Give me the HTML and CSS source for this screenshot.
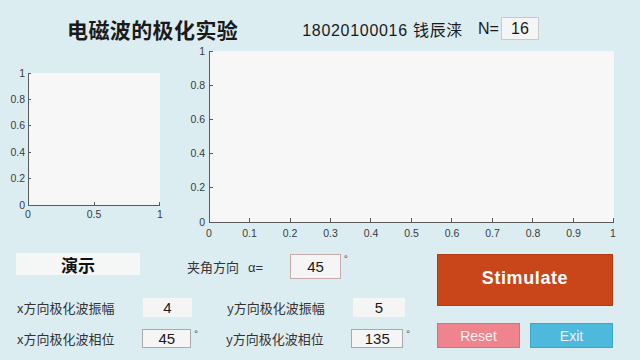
FILE: index.html
```html
<!DOCTYPE html>
<html lang="zh-CN">
  <head>
    <meta charset="UTF-8" />
    <meta name="viewport" content="width=device-width, initial-scale=1.0" />
    <title>电磁波的极化实验</title>
    <link rel="stylesheet" href="styles.css">
  </head>
  <body>
    <div class="header">
      <h1 class="title">电磁波的极化实验</h1>
      <span class="student">18020100016 钱辰涞</span>
      <span class="n-label">N=</span>
      <div class="field n-field">16</div>
    </div>

    <div class="plots">
      <svg class="plot-small" width="170" height="195" viewBox="0 0 170 195">
        <rect x="28" y="28" width="132" height="132" fill="#f7f7f7" />
        <g stroke="#5a5a5a" stroke-width="1">
          <line x1="28.5" y1="28" x2="28.5" y2="160.5" />
          <line x1="28" y1="160.5" x2="160" y2="160.5" />
          <line x1="28" y1="28.5" x2="31" y2="28.5" />
          <line x1="28" y1="54.5" x2="31" y2="54.5" />
          <line x1="28" y1="80.5" x2="31" y2="80.5" />
          <line x1="28" y1="107.5" x2="31" y2="107.5" />
          <line x1="28" y1="133.5" x2="31" y2="133.5" />
          <line x1="94.5" y1="160" x2="94.5" y2="157" />
          <line x1="159.5" y1="160" x2="159.5" y2="157" />
        </g>
        <g class="tick" text-anchor="end">
          <text x="25" y="32">1</text>
          <text x="25" y="58">0.8</text>
          <text x="25" y="84">0.6</text>
          <text x="25" y="111">0.4</text>
          <text x="25" y="137">0.2</text>
          <text x="25" y="164">0</text>
        </g>
        <g class="tick" text-anchor="middle">
          <text x="28" y="173">0</text>
          <text x="94" y="173">0.5</text>
          <text x="160" y="173">1</text>
        </g>
      </svg>

      <svg class="plot-large" width="470" height="195" viewBox="0 0 470 195">
        <rect x="39" y="6" width="405" height="171" fill="#f7f7f7" />
        <g stroke="#5a5a5a" stroke-width="1">
          <line x1="39.5" y1="6" x2="39.5" y2="177.5" />
          <line x1="39" y1="177.5" x2="444" y2="177.5" />
          <line x1="39" y1="6.5" x2="43" y2="6.5" />
          <line x1="39" y1="40.5" x2="43" y2="40.5" />
          <line x1="39" y1="74.5" x2="43" y2="74.5" />
          <line x1="39" y1="108.5" x2="43" y2="108.5" />
          <line x1="39" y1="142.5" x2="43" y2="142.5" />
          <line x1="79.5" y1="177" x2="79.5" y2="173" />
          <line x1="120.5" y1="177" x2="120.5" y2="173" />
          <line x1="160.5" y1="177" x2="160.5" y2="173" />
          <line x1="200.5" y1="177" x2="200.5" y2="173" />
          <line x1="241.5" y1="177" x2="241.5" y2="173" />
          <line x1="281.5" y1="177" x2="281.5" y2="173" />
          <line x1="322.5" y1="177" x2="322.5" y2="173" />
          <line x1="362.5" y1="177" x2="362.5" y2="173" />
          <line x1="403.5" y1="177" x2="403.5" y2="173" />
          <line x1="443.5" y1="177" x2="443.5" y2="173" />
        </g>
        <g class="tick" text-anchor="end">
          <text x="35" y="10">1</text>
          <text x="35" y="44">0.8</text>
          <text x="35" y="78">0.6</text>
          <text x="35" y="112">0.4</text>
          <text x="35" y="146">0.2</text>
          <text x="35" y="181">0</text>
        </g>
        <g class="tick" text-anchor="middle">
          <text x="39" y="192">0</text>
          <text x="79.5" y="192">0.1</text>
          <text x="120" y="192">0.2</text>
          <text x="160.5" y="192">0.3</text>
          <text x="201" y="192">0.4</text>
          <text x="241.5" y="192">0.5</text>
          <text x="282" y="192">0.6</text>
          <text x="322.5" y="192">0.7</text>
          <text x="363" y="192">0.8</text>
          <text x="403.5" y="192">0.9</text>
          <text x="443" y="192">1</text>
        </g>
      </svg>
    </div>

    <div class="controls">
      <div class="params">
        <div class="row row-top">
          <div class="demo">演示</div>
          <span class="angle-label">夹角方向 <span class="alpha">α=</span></span>
          <div class="field field-angle boxed">45</div>
          <span class="deg">°</span>
        </div>
        <div class="row row-amp">
          <span class="label">x方向极化波振幅</span>
          <div class="field field-x">4</div>
          <span class="deg"></span>
          <span class="label">y方向极化波振幅</span>
          <div class="field field-y">5</div>
        </div>
        <div class="row row-phase">
          <span class="label">x方向极化波相位</span>
          <div class="field field-x boxed">45</div>
          <span class="deg">°</span>
          <span class="label">y方向极化波相位</span>
          <div class="field field-y boxed">135</div>
          <span class="deg">°</span>
        </div>
      </div>

      <div class="actions">
        <button class="btn-stimulate">Stimulate</button>
        <div class="small-buttons">
          <button class="btn-reset">Reset</button>
          <button class="btn-exit">Exit</button>
        </div>
      </div>
    </div>
  </body>
</html>
```

FILE: styles.css
```css
body {
  margin: 0;
  width: 640px;
  height: 360px;
  overflow: hidden;
  background: #dcedf2;
  font-family: "Noto Sans CJK SC", "Liberation Sans", sans-serif;
  color: #2b2b2b;
}
.header {
  height: 33px;
  padding-top: 12px;
  display: flex;
  align-items: center;
}
.title {
  margin: 0 0 0 67px;
  font-size: 21px;
  font-weight: 700;
  color: #1a1a1a;
  letter-spacing: 0.4px;
}
.student {
  margin-left: 64px;
  font-family: "Liberation Sans", "Noto Sans CJK SC", sans-serif;
  font-size: 16px;
  letter-spacing: 0.7px;
  color: #1a1a1a;
}
.n-label {
  margin-left: 15px;
  font-family: "Liberation Sans", sans-serif;
  font-size: 16px;
  color: #1a1a1a;
}
.field {
  background: #f5f5f5;
  display: flex;
  align-items: center;
  justify-content: center;
  box-sizing: border-box;
  font-family: "Liberation Sans", sans-serif;
  font-size: 15px;
  color: #1a1a1a;
}
.boxed {
  border: 1px solid #a9a9a9;
}
.n-field {
  width: 38px;
  height: 23px;
  margin-left: 2px;
  border: 1px solid #c9c9c9;
  font-size: 16px;
}
.plots {
  display: flex;
  height: 195px;
}
.tick {
  font-family: "Liberation Sans", sans-serif;
  font-size: 10.5px;
  fill: #3a3a3a;
}
.controls {
  display: flex;
}
.params {
  width: 437px;
}
.row {
  display: flex;
  align-items: center;
  font-size: 13px;
  color: #333;
}
.row-top {
  margin-top: 13px;
  height: 26px;
}
.row-amp {
  margin-top: 19px;
  height: 19px;
}
.row-phase {
  margin-top: 12px;
  height: 19px;
}
.demo {
  margin-left: 16px;
  width: 124px;
  height: 22px;
  align-self: flex-start;
  background: #f5f6f6;
  display: flex;
  align-items: center;
  justify-content: center;
  font-size: 17px;
  font-weight: 700;
  color: #111;
}
.angle-label {
  margin-left: 47px;
  width: 103px;
  font-size: 13px;
}
.alpha {
  margin-left: 6px;
  font-family: "Liberation Sans", sans-serif;
}
.field-angle {
  width: 51px;
  height: 25px;
  border-color: #c9aaaa;
}
.deg {
  width: 34px;
  align-self: flex-start;
  font-size: 10px;
  line-height: 10px;
  padding-left: 3px;
  box-sizing: border-box;
  color: #555;
}
.row-top .deg {
  margin-top: 1px;
}
.label {
  width: 127px;
  box-sizing: border-box;
  padding-left: 1px;
}
.row-amp .label:first-child,
.row-phase .label:first-child {
  margin-left: 16px;
}
.field-x {
  width: 49px;
  height: 19px;
}
.field-y {
  width: 52px;
  height: 19px;
}
.actions {
  padding-top: 14px;
  width: 176px;
}
button {
  border: 1px solid transparent;
  cursor: pointer;
  font-family: "Liberation Sans", sans-serif;
  color: #fff;
  padding: 0;
}
.btn-stimulate {
  width: 176px;
  height: 52px;
  padding-bottom: 4px;
  background: #c9461b;
  border-color: #b23a14;
  font-size: 18px;
  font-weight: 700;
  letter-spacing: 0.6px;
}
.small-buttons {
  display: flex;
  gap: 10px;
  margin-top: 17px;
}
.small-buttons button {
  width: 83px;
  height: 25px;
  font-size: 14px;
  color: #fbeef0;
}
.btn-reset {
  background: #ef848f;
  border-color: #d66f78;
}
.btn-exit {
  background: #4cb9dd;
  border-color: #3fa5c8;
}
```
